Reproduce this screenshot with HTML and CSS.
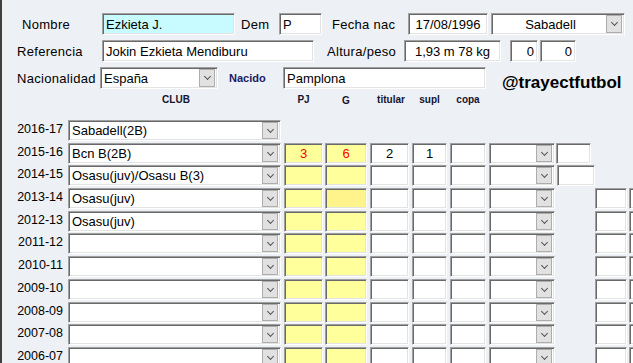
FILE: index.html
```html
<!DOCTYPE html>
<html lang="es">
<head>
    <meta charset="UTF-8">
    <title>Ficha jugador</title>
    <link rel="stylesheet" href="styles.css">
</head>
<body>
<div class="form">

    <!-- datos personales -->
    <div class="line">
        <span class="lbl l-nombre">Nombre</span>
        <div class="field f-nombre">Ezkieta J.</div>
        <span class="lbl l-dem">Dem</span>
        <div class="field f-dem">P</div>
        <span class="lbl l-fecha">Fecha nac</span>
        <div class="field f-fecha center">17/08/1996</div>
        <div class="field combo f-club"><span class="val center">Sabadell</span><span class="drop"></span></div>
    </div>

    <div class="line">
        <span class="lbl l-ref">Referencia</span>
        <div class="field f-ref">Jokin Ezkieta Mendiburu</div>
        <span class="lbl l-altura">Altura/peso</span>
        <div class="field f-altura center">1,93 m 78 kg</div>
        <div class="field f-n1 right">0</div>
        <div class="field f-n2 right">0</div>
    </div>

    <div class="line">
        <span class="lbl l-nac">Nacionalidad</span>
        <div class="field combo f-nac"><span class="val">España</span><span class="drop"></span></div>
        <span class="lbl l-nacido">Nacido</span>
        <div class="field f-nacido">Pamplona</div>
        <span class="handle">@trayectfutbol</span>
    </div>

    <!-- cabecera temporadas -->
    <div class="heads">
        <span class="year"></span>
        <span class="hd club">CLUB</span>
        <span class="hd pj">PJ</span>
        <span class="hd g">G</span>
        <span class="hd tit">titular</span>
        <span class="hd supl">supl</span>
        <span class="hd copa">copa</span>
    </div>

    <div class="seasons">
        <div class="season">
            <span class="year">2016-17</span>
            <div class="field combo club"><span class="val">Sabadell(2B)</span><span class="drop"></span></div>
        </div>

        <div class="season">
            <span class="year">2015-16</span>
            <div class="field combo club"><span class="val">Bcn B(2B)</span><span class="drop"></span></div>
            <div class="field cell pj yellow red">3</div>
            <div class="field cell g yellow red">6</div>
            <div class="field cell tit">2</div>
            <div class="field cell supl">1</div>
            <div class="field cell copa"></div>
            <div class="field combo comp"><span class="val"></span><span class="drop"></span></div>
            <div class="field cell extra-a"></div>
        </div>

        <div class="season">
            <span class="year">2014-15</span>
            <div class="field combo club"><span class="val">Osasu(juv)/Osasu B(3)</span><span class="drop"></span></div>
            <div class="field cell pj yellow"></div>
            <div class="field cell g yellow"></div>
            <div class="field cell tit"></div>
            <div class="field cell supl"></div>
            <div class="field cell copa"></div>
            <div class="field combo comp"><span class="val"></span><span class="drop"></span></div>
            <div class="field cell extra-b"></div>
        </div>

        <div class="season">
            <span class="year">2013-14</span>
            <div class="field combo club"><span class="val">Osasu(juv)</span><span class="drop"></span></div>
            <div class="field cell pj yellow"></div>
            <div class="field cell g yellow focus"></div>
            <div class="field cell tit"></div>
            <div class="field cell supl"></div>
            <div class="field cell copa"></div>
            <div class="field combo comp"><span class="val"></span><span class="drop"></span></div>
            <div class="field cell extra-c"></div>
            <div class="field cell extra-d"></div>
        </div>

        <div class="season">
            <span class="year">2012-13</span>
            <div class="field combo club"><span class="val">Osasu(juv)</span><span class="drop"></span></div>
            <div class="field cell pj yellow"></div>
            <div class="field cell g yellow"></div>
            <div class="field cell tit"></div>
            <div class="field cell supl"></div>
            <div class="field cell copa"></div>
            <div class="field combo comp"><span class="val"></span><span class="drop"></span></div>
            <div class="field cell extra-c"></div>
            <div class="field cell extra-d"></div>
        </div>

        <div class="season">
            <span class="year">2011-12</span>
            <div class="field combo club"><span class="val"></span><span class="drop"></span></div>
            <div class="field cell pj yellow"></div>
            <div class="field cell g yellow"></div>
            <div class="field cell tit"></div>
            <div class="field cell supl"></div>
            <div class="field cell copa"></div>
            <div class="field combo comp"><span class="val"></span><span class="drop"></span></div>
            <div class="field cell extra-c"></div>
            <div class="field cell extra-d"></div>
        </div>

        <div class="season">
            <span class="year">2010-11</span>
            <div class="field combo club"><span class="val"></span><span class="drop"></span></div>
            <div class="field cell pj yellow"></div>
            <div class="field cell g yellow"></div>
            <div class="field cell tit"></div>
            <div class="field cell supl"></div>
            <div class="field cell copa"></div>
            <div class="field combo comp"><span class="val"></span><span class="drop"></span></div>
            <div class="field cell extra-c"></div>
            <div class="field cell extra-d"></div>
        </div>

        <div class="season">
            <span class="year">2009-10</span>
            <div class="field combo club"><span class="val"></span><span class="drop"></span></div>
            <div class="field cell pj yellow"></div>
            <div class="field cell g yellow"></div>
            <div class="field cell tit"></div>
            <div class="field cell supl"></div>
            <div class="field cell copa"></div>
            <div class="field combo comp"><span class="val"></span><span class="drop"></span></div>
            <div class="field cell extra-c"></div>
            <div class="field cell extra-d"></div>
        </div>

        <div class="season">
            <span class="year">2008-09</span>
            <div class="field combo club"><span class="val"></span><span class="drop"></span></div>
            <div class="field cell pj yellow"></div>
            <div class="field cell g yellow"></div>
            <div class="field cell tit"></div>
            <div class="field cell supl"></div>
            <div class="field cell copa"></div>
            <div class="field combo comp"><span class="val"></span><span class="drop"></span></div>
            <div class="field cell extra-c"></div>
            <div class="field cell extra-d"></div>
        </div>

        <div class="season">
            <span class="year">2007-08</span>
            <div class="field combo club"><span class="val"></span><span class="drop"></span></div>
            <div class="field cell pj yellow"></div>
            <div class="field cell g yellow"></div>
            <div class="field cell tit"></div>
            <div class="field cell supl"></div>
            <div class="field cell copa"></div>
            <div class="field combo comp"><span class="val"></span><span class="drop"></span></div>
            <div class="field cell extra-c"></div>
            <div class="field cell extra-d"></div>
        </div>

        <div class="season">
            <span class="year">2006-07</span>
            <div class="field combo club"><span class="val"></span><span class="drop"></span></div>
            <div class="field cell pj yellow"></div>
            <div class="field cell g yellow"></div>
            <div class="field cell tit"></div>
            <div class="field cell supl"></div>
            <div class="field cell copa"></div>
            <div class="field combo comp"><span class="val"></span><span class="drop"></span></div>
            <div class="field cell extra-c"></div>
            <div class="field cell extra-d"></div>
        </div>
    </div>

</div>
</body>
</html>
```
FILE: styles.css
```css
html, body {
    margin: 0;
    padding: 0;
    height: 363px;
    overflow: hidden;
}

body {
    background-color: #edf0f5;
    font-family: "Liberation Sans", Arial, sans-serif;
    font-size: 13px;
    color: #000;
}

.form {
    border-left: 2px solid #3f3f3f;
    height: 100%;
    box-sizing: border-box;
    padding-top: 13px;
    overflow: hidden;
}

/* top block */
.line {
    display: flex;
    height: 22px;
    margin-bottom: 5px;
}

.lbl {
    display: flex;
    align-items: center;
    box-sizing: border-box;
    letter-spacing: 0.3px;
    white-space: nowrap;
    flex-shrink: 0;
}

.l-nombre { margin-left: 20px; width: 80px; }
.l-dem { width: 44px; padding-left: 6px; }
.l-fecha { width: 86px; padding-left: 10px; }
.l-ref { margin-left: 15px; width: 85px; }
.l-altura { width: 90px; padding-left: 13px; }
.l-nac { margin-left: 15px; width: 83px; }
.l-nacido {
    width: 65px;
    padding-left: 11px;
    font-size: 11px;
    font-weight: bold;
    letter-spacing: 0;
    color: #1b1b62;
}

.field {
    box-sizing: border-box;
    display: flex;
    align-items: center;
    flex-shrink: 0;
    background-color: #fff;
    border: 1px solid;
    border-color: #a0a0a0 #fff #fff #a0a0a0;
    box-shadow: inset 1px 1px 0 #696969, inset -1px -1px 0 #e3e3e3;
    padding: 0 3px;
    white-space: nowrap;
    overflow: hidden;
}

.center { justify-content: center; text-align: center; }
.right { justify-content: flex-end; }

.f-nombre { width: 133px; background-color: #c8fbff; }
.f-dem { width: 43px; }
.f-fecha { width: 80px; }
.f-club { width: 134px; margin-left: 3px; }
.f-ref { width: 212px; }
.f-altura { width: 97px; }
.f-n1 { width: 28px; margin-left: 9px; }
.f-n2 { width: 36px; margin-left: 2px; }
.f-nac { width: 118px; }
.f-nacido { width: 203px; }

.handle {
    align-self: flex-end;
    margin-left: 16px;
    margin-bottom: -2px;
    font-size: 17px;
    font-weight: bold;
    line-height: 17px;
    white-space: nowrap;
}

/* combo box */
.combo {
    padding-right: 2px;
}

.combo .val {
    flex: 1;
    overflow: hidden;
}

.drop {
    position: relative;
    align-self: stretch;
    width: 16px;
    margin: 1px 0;
    flex-shrink: 0;
    box-sizing: border-box;
    background-color: #e1e1e1;
    border: 1px solid #adadad;
}

.drop::after {
    content: "";
    position: absolute;
    left: 5px;
    top: 4px;
    width: 4px;
    height: 4px;
    border-right: 1px solid #555;
    border-bottom: 1px solid #555;
    transform: rotate(45deg);
}

/* seasons */
.heads {
    display: flex;
    height: 12px;
    margin-top: -1px;
    margin-bottom: 15px;
    align-items: center;
}

.hd {
    font-size: 10px;
    font-weight: bold;
    text-align: center;
    color: #14142e;
    flex-shrink: 0;
}

.hd.club { padding-left: 3px; box-sizing: border-box; }
.hd.g { padding-top: 3px; }
.hd.tit { padding-left: 3px; box-sizing: border-box; }

.seasons {
    display: flex;
    flex-direction: column;
    gap: 1.7px;
}

.season {
    display: flex;
    height: 21px;
}

.year {
    width: 66px;
    flex-shrink: 0;
    box-sizing: border-box;
    padding-right: 5px;
    text-align: right;
    font-size: 12.5px;
    line-height: 19px;
}

.club { width: 213px; }
.pj { width: 39px; margin-left: 3px; }
.g { width: 42px; margin-left: 2px; }
.tit { width: 39px; margin-left: 3px; }
.supl { width: 35px; margin-left: 3px; }
.copa { width: 36px; margin-left: 3px; }
.comp { width: 66px; margin-left: 3px; }
.extra-a { width: 35px; margin-left: 1px; }
.extra-b { width: 38px; margin-left: 2px; }
.extra-c { width: 32px; margin-left: 40px; }
.extra-d { width: 32px; margin-left: 2px; }

.cell {
    justify-content: center;
}

.yellow { background-color: #ffff9c; }
.yellow.focus { background-color: #fff48c; }
.red { color: #f00; }
```
